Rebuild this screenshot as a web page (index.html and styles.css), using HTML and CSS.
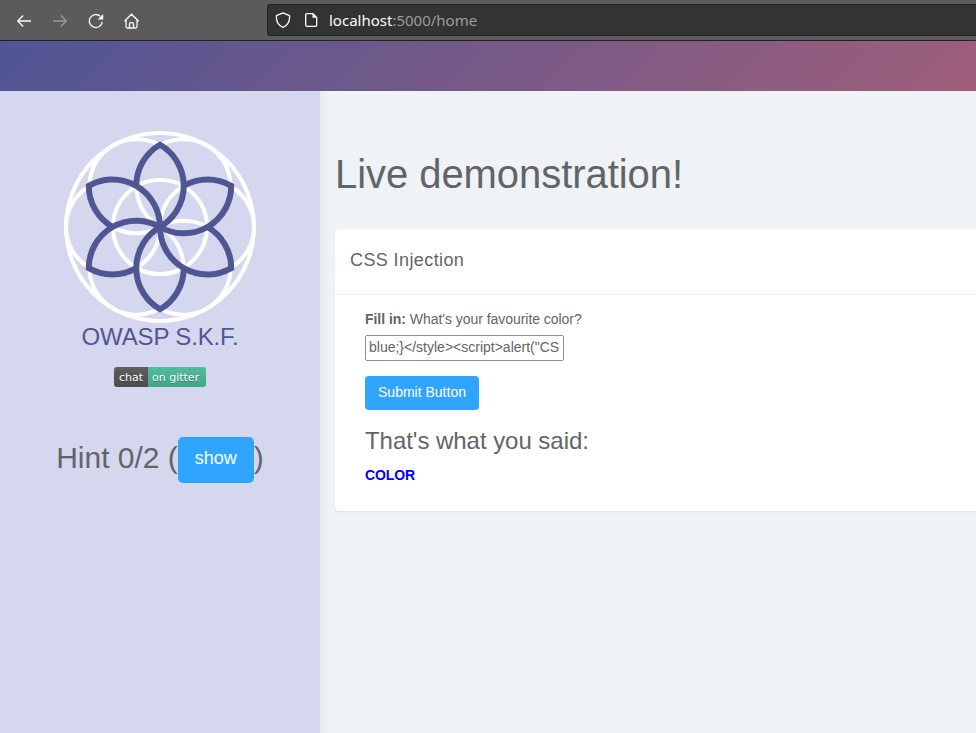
FILE: index.html
```html
<!DOCTYPE html>
<html lang="en">
<head>
<meta charset="utf-8">
<title>OWASP S.K.F.</title>
<link rel="stylesheet" href="styles.css">
</head>
<body>
<header class="toolbar">
  <nav class="nav">
    <svg class="icon" viewBox="0 0 16 16"><path d="M15 8H2M7.2 2.5 1.7 8l5.500 5.500"/></svg>
    <svg class="icon dim" viewBox="0 0 16 16"><path d="M1 8h13M8.800 2.500 14.300 8l-5.500 5.500"/></svg>
    <svg class="icon" viewBox="0 0 16 16"><path d="M14.300 8.800A6.500 6.500 0 1 1 12.200 3.200"/><path class="solid" d="M15.200 1v5.500H9.700z"/></svg>
    <svg class="icon" viewBox="0 0 16 16"><path d="M.5 8.300 7.500 1.200l7.200 7.100M2 7v6.500q0 1.500 1.500 1.500h8q1.500 0 1.500-1.500V7M5.500 15v-4q0-1.300 1.300-1.300h1.400q1.300 0 1.300 1.300v4"/></svg>
  </nav>
  <div class="address">
    <svg class="icon" viewBox="0 0 16 16"><path d="M8 .8 14.600 3.600C14.900 9 12.500 13.500 8 15.300 3.500 13.500 1.100 9 1.400 3.600z" stroke-linejoin="round"/></svg>
    <svg class="icon" viewBox="0 0 16 16"><path d="M4 1.700h6l3.700 3.700V13q0 1.300-1.300 1.300H4Q2.700 14.300 2.700 13V3Q2.700 1.700 4 1.700z"/><path class="solid" d="M9.500 1.500v4.300h4.300z"/></svg>
    <span class="url"><b>localhost</b>:5000/home</span>
  </div>
</header>
<div class="banner"></div>
<div class="layout">
  <aside class="sidebar">
    <svg class="logo" viewBox="-96 -96 192 192">
      <defs>
        <g id="petal">
          <path d="M0 0A47.500 47.500 0 0 0 0-82.270A47.500 47.500 0 0 0-23.750-41.140"/>
        </g>
      </defs>
      <g class="rings">
        <circle r="94"/><circle r="47"/>
        <circle cx="47" r="47"/><circle cx="23.500" cy="40.700" r="47"/><circle cx="-23.500" cy="40.700" r="47"/>
        <circle cx="-47" r="47"/><circle cx="-23.500" cy="-40.700" r="47"/><circle cx="23.500" cy="-40.700" r="47"/>
      </g>
      <g class="petals">
        <use href="#petal"/><use href="#petal" transform="rotate(60)"/><use href="#petal" transform="rotate(120)"/>
        <use href="#petal" transform="rotate(180)"/><use href="#petal" transform="rotate(240)"/><use href="#petal" transform="rotate(300)"/>
      </g>
    </svg>
    <div class="brand">OWASP S.K.F.</div>
    <div class="badge"><span class="badge-left">chat</span><span class="badge-right">on gitter</span></div>
    <div class="hint"><span>Hint 0/2 (</span><button class="show">show</button><span>)</span></div>
  </aside>
  <main class="content">
    <h1>Live demonstration!</h1>
    <section class="card">
      <h2>CSS Injection</h2>
      <form class="card-body">
        <label for="color"><b>Fill in:</b> What's your favourite color?</label>
        <input id="color" type="text" value="blue;}&lt;/style&gt;&lt;script&gt;alert(&quot;CS">
        <button type="button" class="submit">Submit Button</button>
        <h3>That's what you said:</h3>
        <strong class="answer">COLOR</strong>
      </form>
    </section>
  </main>
</div>
</body>
</html>
```

FILE: styles.css
```css
* { box-sizing: border-box; }
body {
  margin: 0;
  height: 733px;
  overflow: hidden;
  display: flex;
  flex-direction: column;
  background: #eff3f6;
  color: #616569;
  font: 14px/20px "Liberation Sans", sans-serif;
}
button { border: 0; padding: 0; background: #30a5ff; color: #fff; font-family: inherit; }

.toolbar {
  flex: none;
  height: 41px;
  display: flex;
  align-items: flex-start;
  padding: 4px 0 0 16px;
  background: #5b5b5b;
  border-bottom: 1px solid #222;
}
.nav { display: flex; gap: 20px; width: 251px; padding-top: 8.500px; }
.icon { flex: none; width: 16px; height: 16px; fill: none; stroke: #fbfbfe; stroke-width: 1.300; }
.icon .solid { fill: #fbfbfe; stroke: none; }
.dim { opacity: .4; }
.address {
  flex: 1;
  height: 32px;
  display: flex;
  align-items: center;
  padding-left: 7px;
  background: #333;
  border: 1px solid #222;
  border-right: 0;
  border-radius: 4px 0 0 4px;
}
.address .icon + .icon { margin-left: 12px; }
.url { margin-left: 10px; font: 15px/20px "Noto Sans", sans-serif; color: #9c9c9c; white-space: nowrap; }
.url b { font-weight: 400; color: #fbfbfe; }

.banner { flex: none; height: 50px; background: linear-gradient(135deg, #4f5595, #9f5e7a); }

.layout { flex: 1; display: flex; min-height: 0; }
.sidebar {
  flex: none;
  width: 320px;
  padding-top: 40px;
  display: flex;
  flex-direction: column;
  align-items: center;
  background: #d5d7ee;
}
.logo { flex: none; width: 192px; height: 192px; fill: none; }
.rings { stroke: #fff; stroke-width: 4; }
.petals { stroke: #505694; stroke-width: 6; stroke-miterlimit: 6; }
.brand { font-size: 24px; line-height: 28px; letter-spacing: -.15px; color: #505694; white-space: nowrap; }
.badge {
  display: flex;
  margin-top: 16px;
  height: 20px;
  border-radius: 3px;
  overflow: hidden;
  font: 11px/21px "DejaVu Sans", sans-serif;
  color: #fff;
  text-shadow: 0 1px 0 rgba(1, 1, 1, .3);
}
.badge-left { width: 34px; padding-left: 5px; background: linear-gradient(#5f5f5f, #4b4b4b); }
.badge-right { width: 58px; padding-left: 4px; background: linear-gradient(#53bc9d, #40a787); white-space: nowrap; }
.hint { display: flex; margin-top: 50px; font-size: 30px; line-height: 42px; white-space: pre; }
.show { width: 76px; height: 46px; border-radius: 5px; font-size: 18px; line-height: 42px; padding-bottom: 4px; }

.content { flex: 1; min-width: 0; padding: 58px 0 0 15px; background: linear-gradient(90deg, #e8ecef, #eff3f6 10px); }
h1 { margin: 0; font-size: 40px; line-height: 50px; font-weight: 400; letter-spacing: -.06px; }
.card { margin-top: 30px; height: 282px; background: #fff; border-radius: 4px 0 0 4px; box-shadow: 0 1px 2px rgba(0, 0, 0, .08); }
h2 { margin: 0; height: 66px; padding-left: 15px; border-bottom: 1px solid #e9ecf2; font-size: 18px; line-height: 62px; font-weight: 400; letter-spacing: .4px; }
.card-body { display: flex; flex-direction: column; align-items: flex-start; padding: 14px 30px 0; }
label { letter-spacing: -.04px; }
input { width: 199px; height: 26px; margin-top: 6px; padding: 0 3px 2px; border: 1px solid #8f8f9d; border-radius: 2px; background: #fff; color: inherit; font: 14px/20px "Liberation Sans", sans-serif; }
.submit { margin-top: 15px; width: 114px; height: 34px; padding-bottom: 2px; border-radius: 4px; font-size: 14px; }
h3 { margin: 17px 0 0; font-size: 24px; line-height: 28px; font-weight: 400; letter-spacing: -.04px; }
.answer { margin-top: 10px; color: #00f; letter-spacing: -.1px; }
```
